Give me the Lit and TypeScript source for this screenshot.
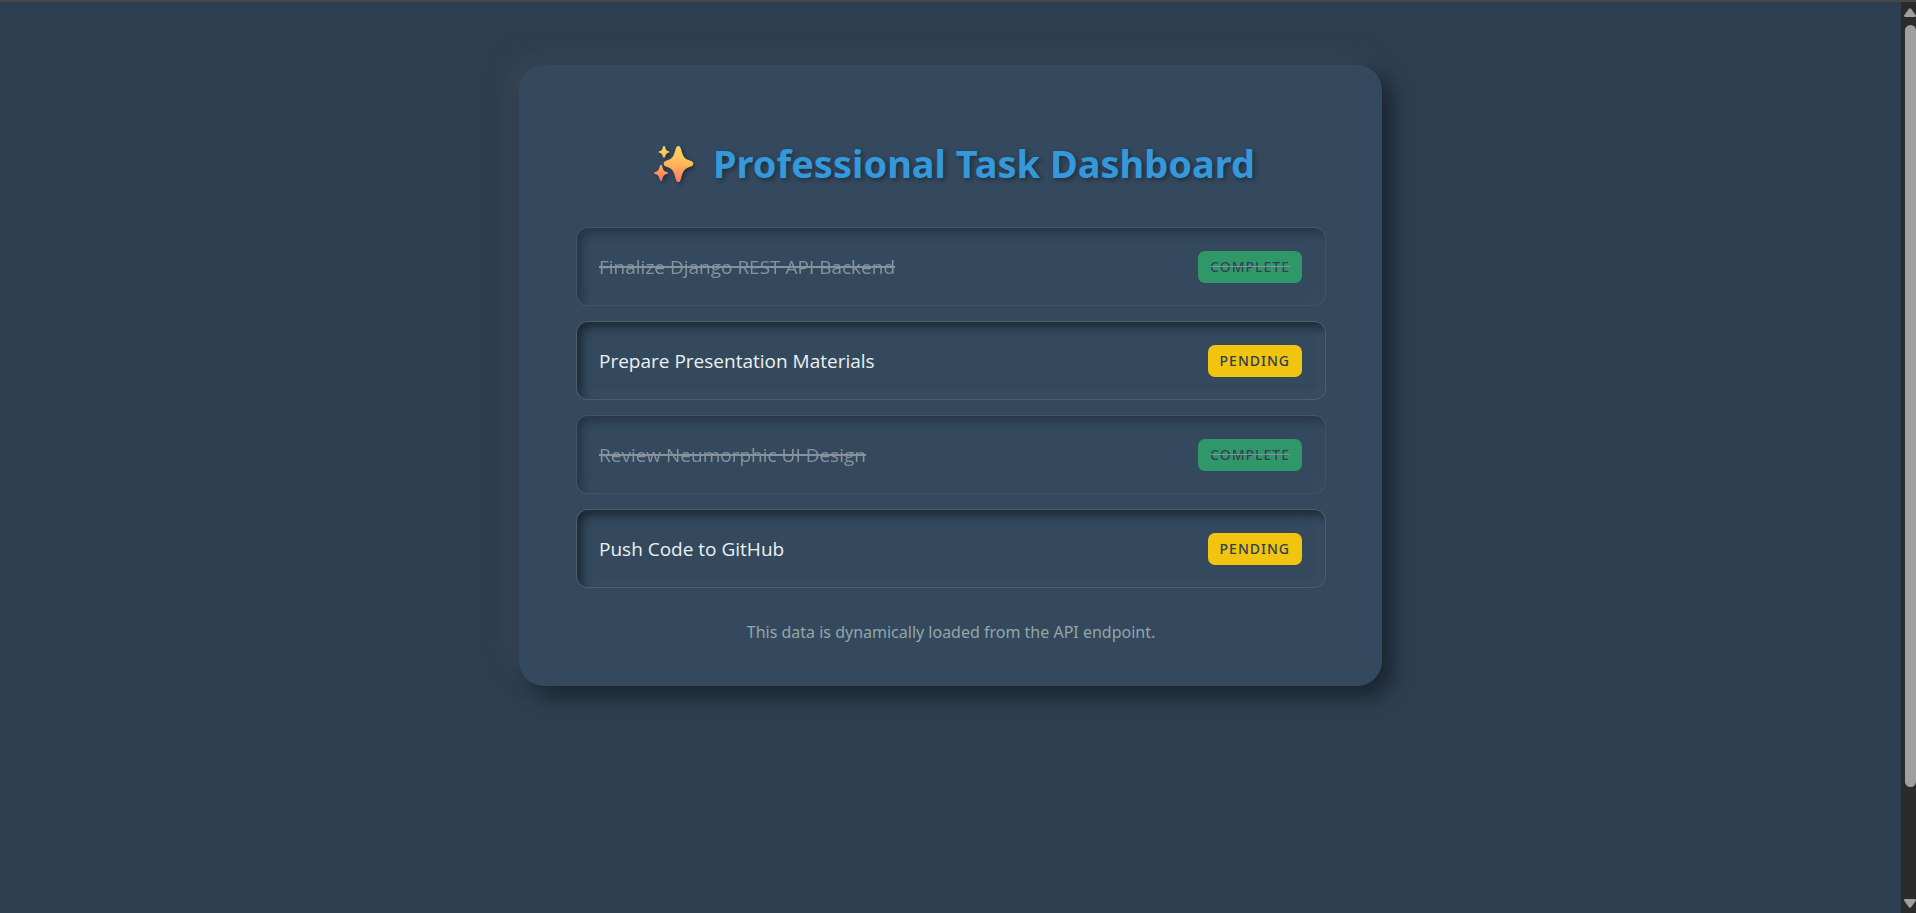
import { LitElement, html, css } from "lit";
import { customElement, property, state } from "lit/decorators.js";
import { classMap } from "lit/directives/class-map.js";

interface Task {
  title: string;
  done: boolean;
}

@customElement("task-item")
class TaskItem extends LitElement {
  @property() label = "";
  @property({ type: Boolean }) done = false;

  static styles = css`
    :host {
      display: block;
    }
    .task {
      display: flex;
      align-items: center;
      justify-content: space-between;
      gap: 16px;
      box-sizing: border-box;
      min-height: 79px;
      padding: 22px 23px 22px 22px;
      border: 1px solid rgba(255, 255, 255, 0.12);
      border-radius: 12px;
      background: #34495e;
      box-shadow:
        inset 5px 5px 10px rgba(0, 0, 0, 0.45),
        inset -5px -5px 10px rgba(74, 88, 112, 0.35);
      color: #ecf0f1;
      font-size: 19px;
      line-height: 26px;
    }
    .title {
      font-family: "Segoe UI", "Open Sans", "Noto Sans", sans-serif;
    }
    .done {
      opacity: 0.6;
      color: #bdc3c7;
    }
    .done .title,
    .done .badge {
      text-decoration: line-through;
      text-decoration-color: #bdc3c7;
    }
    .done .title {
      text-decoration-thickness: 2px;
    }
    .badge {
      padding: 6px 12px;
      border-radius: 7px;
      background: #f1c40f;
      color: #2c3e50;
      font-size: 14px;
      font-weight: 500;
      line-height: 20px;
      letter-spacing: 1px;
      text-transform: uppercase;
    }
    .done .badge {
      background: #2ecc71;
    }
  `;

  render() {
    return html`
      <div class=${classMap({ task: true, done: this.done })}>
        <span class="title">${this.label}</span>
        <span class="badge">${this.done ? "Complete" : "Pending"}</span>
      </div>
    `;
  }
}

@customElement("app-root")
class AppRoot extends LitElement {
  @state() private tasks: Task[] = [
    { title: "Finalize Django REST API Backend", done: true },
    { title: "Prepare Presentation Materials", done: false },
    { title: "Review Neumorphic UI Design", done: true },
    { title: "Push Code to GitHub", done: false },
  ];

  static styles = css`
    :host {
      display: grid;
      grid-template: 2px 1fr / 1fr 15px;
      min-height: 100vh;
      background: #2c3e50;
      font-family: "Segoe UI", "Noto Sans", "Open Sans", sans-serif;
    }
    .edge {
      grid-column: 1 / -1;
      background: #484848;
    }
    main {
      display: flex;
      justify-content: center;
      align-items: flex-start;
      padding: 63px 24px;
    }
    .card {
      box-sizing: border-box;
      width: 100%;
      max-width: 863px;
      padding: 71px 56px 42px 57px;
      border-radius: 25px;
      background: #34495e;
      box-shadow:
        10px 10px 20px rgba(0, 0, 0, 0.4),
        -10px -10px 20px rgba(66, 74, 88, 0.55);
    }
    h1 {
      display: flex;
      justify-content: center;
      align-items: center;
      gap: 19px;
      margin: 0 0 36px;
      color: #3498db;
      font-size: 38px;
      line-height: 55px;
      font-weight: 700;
      text-shadow: 2px 2px 5px rgba(0, 0, 0, 0.4);
    }
    .sparkles {
      flex: none;
      width: 47px;
      height: 36px;
      overflow: visible;
      filter: drop-shadow(2px 2px 2px rgba(0, 0, 0, 0.35));
    }
    ul {
      display: grid;
      gap: 15px;
      margin: 0;
      padding: 0;
      list-style: none;
    }
    .note {
      margin: 32px 0 0;
      color: #95a5a6;
      font-size: 16px;
      line-height: 24px;
      text-align: center;
    }
    .scroll {
      display: flex;
      flex-direction: column;
      align-items: flex-end;
      padding: 6px 0 5px;
      background: #2b2b2b;
    }
    .arrow {
      flex: none;
      width: 12px;
      height: 9px;
      fill: #9f9f9f;
    }
    .track {
      flex: 1;
      width: 11px;
      padding: 8px 0;
    }
    .thumb {
      height: 88%;
      border-radius: 6px;
      background: #9f9f9f;
    }
  `;

  render() {
    return html`
      <div class="edge"></div>
      <main>
        <section class="card">
          <h1>
            <svg class="sparkles" viewBox="0 0 141 108" aria-hidden="true">
              <defs>
                <linearGradient id="glow" gradientUnits="userSpaceOnUse" x1="90" y1="0" x2="76" y2="108">
                  <stop offset="0" stop-color="#ffd65c" />
                  <stop offset="0.5" stop-color="#ffb65a" />
                  <stop offset="1" stop-color="#ff7462" />
                </linearGradient>
              </defs>
              <g fill="url(#glow)">
                <path d="M94 0C98 0 100 3 102 9C108 32 112 38 127 43C135 46 139 48 139 53C139 58 135 60 127 63C112 68 108 75 102 98C100 105 98 108 94 108C90 108 88 105 86 98C80 75 76 68 61 63C53 60 50 58 50 53C50 48 53 46 61 43C76 38 80 32 86 9C88 3 90 0 94 0Z" />
                <path d="M51 0C53 0 54 2 55 6C57 12 58 13 62 15C65 16 67 16 67 18C67 20 65 20 62 21C58 23 57 24 55 30C54 34 53 35 51 35C49 35 48 34 47 30C45 24 44 23 40 21C37 20 35 20 35 18C35 16 37 16 40 15C44 13 45 12 47 6C48 2 49 0 51 0Z" />
                <path d="M42 56C44 56 45 58 46 62C49 72 50 74 57 77C61 78 63 79 63 81C63 83 61 84 57 85C50 88 49 90 46 99C45 103 44 105 42 105C40 105 39 103 38 99C35 90 34 88 27 85C23 84 21 83 21 81C21 79 23 78 27 77C34 74 35 72 38 62C39 58 40 56 42 56Z" />
              </g>
            </svg>
            <span>Professional Task Dashboard</span>
          </h1>
          <ul>
            ${this.tasks.map(
              (t) => html`<li><task-item .label=${t.title} .done=${t.done}></task-item></li>`
            )}
          </ul>
          <p class="note">This data is dynamically loaded from the API endpoint.</p>
        </section>
      </main>
      <div class="scroll" aria-hidden="true">
        <svg class="arrow" viewBox="0 0 12 9"><path d="M5 .8Q6-.4 7 .8L12 7.6Q12 9 11 9H1Q0 9 0 7.6Z" /></svg>
        <div class="track"><div class="thumb"></div></div>
        <svg class="arrow" viewBox="0 0 12 9"><path d="M5 8.2Q6 9.4 7 8.2L12 1.4Q12 0 11 0H1Q0 0 0 1.4Z" /></svg>
      </div>
    `;
  }
}
